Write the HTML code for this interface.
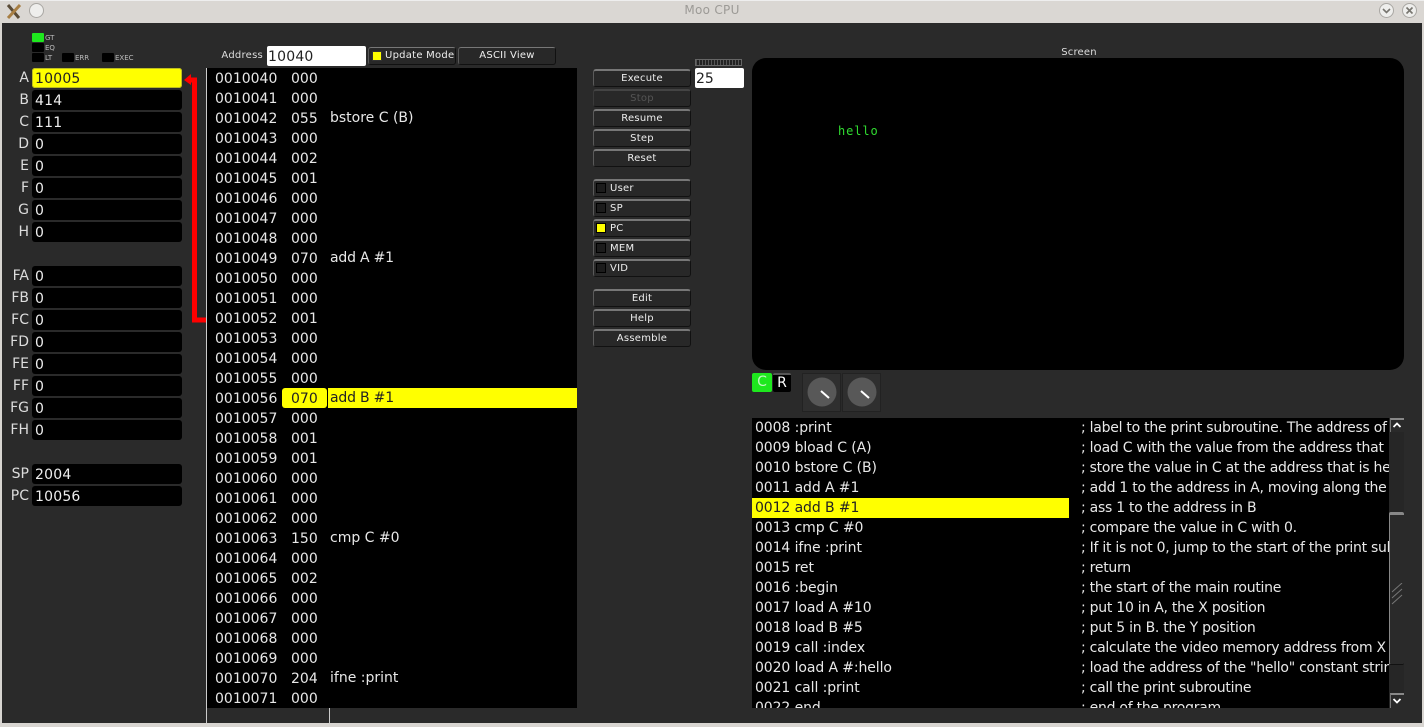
<!DOCTYPE html>
<html><head><meta charset="utf-8"><style>
html,body{margin:0;padding:0;width:1424px;height:727px;overflow:hidden;background:#2a2a2a}
body{position:relative;font-family:"DejaVu Sans",sans-serif;color:#e8e8e8;font-size:14px}
div,span{position:absolute;white-space:nowrap;box-sizing:border-box}
.t{line-height:20px;height:20px;margin-top:1px}
.reg{left:32px;width:150px;height:20px;background:#000;border-radius:3px;color:#eee;line-height:22px;padding-left:3px;letter-spacing:.2px}
.lab{width:29px;left:0;text-align:right;color:#ddd;line-height:20px;height:20px}
.btn{left:593px;width:98px;height:18px;background:#282828;border-radius:3px;border-top:2px solid #777;border-left:1px solid #5a5a5a;border-right:1px solid #111;border-bottom:1px solid #111;font-size:10px;line-height:15px;text-align:center;color:#eee;letter-spacing:.25px}
.l{text-align:left;padding-left:16px}
.led{width:10px;height:10px;background:#1c1c1c;border:1px solid #000;left:2px;top:2px}
.s{width:12px;height:9px;background:#000;border-radius:1px}
.sm{font-size:7px;color:#bbb;line-height:10px;height:10px}
.sr{left:0;color:#e8e8e8;line-height:20px;height:20px;margin-top:1px;letter-spacing:-.1px}
.src .sr:nth-child(odd){letter-spacing:-.26px}
</style></head><body>
<!-- title bar -->
<div style="left:0;top:0;width:1424px;height:23px;background:#dad7d3;border-top:1px solid #eee"></div>
<div style="left:0;top:0;width:1424px;height:23px;text-align:center;font-size:12px;line-height:21px;color:#9c9a96;letter-spacing:.3px">Moo CPU</div>
<svg style="position:absolute;left:5px;top:3px" width="18" height="17" viewBox="0 0 18 17"><path d="M3 2L14 15" stroke="#5a4c38" stroke-width="3"/><path d="M15 2L3 15" stroke="#a87f44" stroke-width="3"/></svg>
<div style="left:29px;top:3px;width:15px;height:15px;border-radius:50%;background:#eeeeec;border:1px solid #a9a7a3"></div>
<div style="left:1379px;top:3px;width:15px;height:15px;border-radius:50%;background:#eeeeec;border:1px solid #a9a7a3"></div>
<svg style="position:absolute;left:1379px;top:3px" width="15" height="15"><path d="M4 6L7.500 9.500L11 6" stroke="#77756f" stroke-width="1.600" fill="none"/></svg>
<div style="left:1402px;top:3px;width:15px;height:15px;border-radius:50%;background:#eeeeec;border:1px solid #a9a7a3"></div>
<svg style="position:absolute;left:1402px;top:3px" width="15" height="15"><path d="M4.500 4.500L10.500 10.500M10.500 4.500L4.500 10.500" stroke="#77756f" stroke-width="1.600"/></svg>
<div style="left:0;top:23px;width:2px;height:700px;background:#d8d5d1"></div>
<div style="left:1422px;top:23px;width:2px;height:700px;background:#d8d5d1"></div>
<div style="left:0;top:723px;width:1424px;height:4px;background:#d8d5d1"></div>

<!-- flags -->
<div class="s" style="left:32px;top:33px;background:#1ee81e"></div><div class="sm" style="left:45px;top:33px">GT</div>
<div class="s" style="left:32px;top:43px"></div><div class="sm" style="left:45px;top:43px">EQ</div>
<div class="s" style="left:32px;top:53px"></div><div class="sm" style="left:45px;top:53px">LT</div>
<div class="s" style="left:62px;top:53px"></div><div class="sm" style="left:75px;top:53px">ERR</div>
<div class="s" style="left:102px;top:53px"></div><div class="sm" style="left:115px;top:53px">EXEC</div>

<!-- registers -->
<div class="lab" style="top:68px">A</div><div class="reg" style="top:68px;background:#ff0;color:#222;box-shadow:inset 0 0 0 1px #bdbd20">10005</div>
<div class="lab" style="top:90px">B</div><div class="reg" style="top:90px">414</div>
<div class="lab" style="top:112px">C</div><div class="reg" style="top:112px">111</div>
<div class="lab" style="top:134px">D</div><div class="reg" style="top:134px">0</div>
<div class="lab" style="top:156px">E</div><div class="reg" style="top:156px">0</div>
<div class="lab" style="top:178px">F</div><div class="reg" style="top:178px">0</div>
<div class="lab" style="top:200px">G</div><div class="reg" style="top:200px">0</div>
<div class="lab" style="top:222px">H</div><div class="reg" style="top:222px">0</div>
<div class="lab" style="top:266px">FA</div><div class="reg" style="top:266px">0</div>
<div class="lab" style="top:288px">FB</div><div class="reg" style="top:288px">0</div>
<div class="lab" style="top:310px">FC</div><div class="reg" style="top:310px">0</div>
<div class="lab" style="top:332px">FD</div><div class="reg" style="top:332px">0</div>
<div class="lab" style="top:354px">FE</div><div class="reg" style="top:354px">0</div>
<div class="lab" style="top:376px">FF</div><div class="reg" style="top:376px">0</div>
<div class="lab" style="top:398px">FG</div><div class="reg" style="top:398px">0</div>
<div class="lab" style="top:420px">FH</div><div class="reg" style="top:420px">0</div>
<div class="lab" style="top:464px">SP</div><div class="reg" style="top:464px">2004</div>
<div class="lab" style="top:486px">PC</div><div class="reg" style="top:486px">10056</div>

<!-- arrow -->
<svg style="position:absolute;left:183px;top:70px" width="25" height="256"><path d="M6 10H11.500V250H23" stroke="#f00" stroke-width="5" fill="none"/><path d="M1 10L8 4V15Z" fill="#f00"/></svg>

<!-- address row -->
<div style="left:200px;width:63px;top:48px;text-align:right;font-size:10px;line-height:15px;color:#ddd;letter-spacing:.25px">Address</div>
<div style="left:267px;top:46px;width:99px;height:20px;background:#fff;border-radius:2px;color:#222;line-height:22px;padding-left:1px;letter-spacing:.2px">10040</div>
<div class="btn l" style="left:368px;top:47px;width:88px;height:18px;padding-left:16px;border-top-width:1px;line-height:16px"><span style="left:3px;top:3px;width:10px;height:10px;background:#ff0;border:1px solid #333"></span>Update Mode</div>
<div class="btn" style="left:458px;top:47px;width:98px;height:18px;border-top-width:1px;line-height:16px">ASCII View</div>

<!-- memory -->
<div style="left:206px;top:68px;width:1px;height:655px;background:#ccc"></div>
<div style="left:329px;top:708px;width:1px;height:15px;background:#ccc"></div>
<div style="left:207px;top:68px;width:370px;height:640px;background:#000" id="mem"></div>
<div style="left:282px;top:388px;width:45px;height:20px;background:#ff0;border-radius:3px"></div>
<div style="left:328px;top:388px;width:249px;height:20px;background:#ff0"></div>
<div class="t" style="left:215px;top:68px">0010040</div><div class="t" style="left:291px;top:68px">000</div>
<div class="t" style="left:215px;top:88px">0010041</div><div class="t" style="left:291px;top:88px">000</div>
<div class="t" style="left:215px;top:108px">0010042</div><div class="t" style="left:291px;top:108px">055</div><div class="t" style="left:330px;top:107px">bstore C (B)</div>
<div class="t" style="left:215px;top:128px">0010043</div><div class="t" style="left:291px;top:128px">000</div>
<div class="t" style="left:215px;top:148px">0010044</div><div class="t" style="left:291px;top:148px">002</div>
<div class="t" style="left:215px;top:168px">0010045</div><div class="t" style="left:291px;top:168px">001</div>
<div class="t" style="left:215px;top:188px">0010046</div><div class="t" style="left:291px;top:188px">000</div>
<div class="t" style="left:215px;top:208px">0010047</div><div class="t" style="left:291px;top:208px">000</div>
<div class="t" style="left:215px;top:228px">0010048</div><div class="t" style="left:291px;top:228px">000</div>
<div class="t" style="left:215px;top:248px">0010049</div><div class="t" style="left:291px;top:248px">070</div><div class="t" style="left:330px;top:247px;letter-spacing:-.2px">add A #1</div>
<div class="t" style="left:215px;top:268px">0010050</div><div class="t" style="left:291px;top:268px">000</div>
<div class="t" style="left:215px;top:288px">0010051</div><div class="t" style="left:291px;top:288px">000</div>
<div class="t" style="left:215px;top:308px">0010052</div><div class="t" style="left:291px;top:308px">001</div>
<div class="t" style="left:215px;top:328px">0010053</div><div class="t" style="left:291px;top:328px">000</div>
<div class="t" style="left:215px;top:348px">0010054</div><div class="t" style="left:291px;top:348px">000</div>
<div class="t" style="left:215px;top:368px">0010055</div><div class="t" style="left:291px;top:368px">000</div>
<div class="t" style="left:215px;top:388px">0010056</div><div class="t" style="left:291px;top:388px;color:#222">070</div><div class="t" style="left:330px;top:387px;color:#222;letter-spacing:-.2px">add B #1</div>
<div class="t" style="left:215px;top:408px">0010057</div><div class="t" style="left:291px;top:408px">000</div>
<div class="t" style="left:215px;top:428px">0010058</div><div class="t" style="left:291px;top:428px">001</div>
<div class="t" style="left:215px;top:448px">0010059</div><div class="t" style="left:291px;top:448px">001</div>
<div class="t" style="left:215px;top:468px">0010060</div><div class="t" style="left:291px;top:468px">000</div>
<div class="t" style="left:215px;top:488px">0010061</div><div class="t" style="left:291px;top:488px">000</div>
<div class="t" style="left:215px;top:508px">0010062</div><div class="t" style="left:291px;top:508px">000</div>
<div class="t" style="left:215px;top:528px">0010063</div><div class="t" style="left:291px;top:528px">150</div><div class="t" style="left:330px;top:527px">cmp C #0</div>
<div class="t" style="left:215px;top:548px">0010064</div><div class="t" style="left:291px;top:548px">000</div>
<div class="t" style="left:215px;top:568px">0010065</div><div class="t" style="left:291px;top:568px">002</div>
<div class="t" style="left:215px;top:588px">0010066</div><div class="t" style="left:291px;top:588px">000</div>
<div class="t" style="left:215px;top:608px">0010067</div><div class="t" style="left:291px;top:608px">000</div>
<div class="t" style="left:215px;top:628px">0010068</div><div class="t" style="left:291px;top:628px">000</div>
<div class="t" style="left:215px;top:648px">0010069</div><div class="t" style="left:291px;top:648px">000</div>
<div class="t" style="left:215px;top:668px">0010070</div><div class="t" style="left:291px;top:668px">204</div><div class="t" style="left:330px;top:667px">ifne :print</div>
<div class="t" style="left:215px;top:688px">0010071</div><div class="t" style="left:291px;top:688px">000</div>

<!-- buttons -->
<div class="btn" style="top:69px">Execute</div>
<div class="btn" style="top:89px;color:#555;border-top-color:#444;border-left-color:#3a3a3a">Stop</div>
<div class="btn" style="top:109px">Resume</div>
<div class="btn" style="top:129px">Step</div>
<div class="btn" style="top:149px">Reset</div>
<div class="btn l" style="top:179px"><span class="led"></span>User</div>
<div class="btn l" style="top:199px"><span class="led"></span>SP</div>
<div class="btn l" style="top:219px"><span class="led" style="background:#ff0"></span>PC</div>
<div class="btn l" style="top:239px"><span class="led"></span>MEM</div>
<div class="btn l" style="top:259px"><span class="led"></span>VID</div>
<div class="btn" style="top:289px">Edit</div>
<div class="btn" style="top:309px">Help</div>
<div class="btn" style="top:329px">Assemble</div>

<!-- speed -->
<div style="left:695px;top:59px;width:47px;height:7px;background:repeating-linear-gradient(90deg,#555 0 1px,#222 1px 3px);border:1px solid #666"></div>
<div style="left:695px;top:68px;width:49px;height:20px;background:#fff;border-radius:2px;color:#222;line-height:22px;padding-left:1px">25</div>

<!-- screen -->
<div style="left:752px;top:46px;width:654px;text-align:center;font-size:10px;line-height:13px;color:#ddd;letter-spacing:.2px">Screen</div>
<div style="left:752px;top:58px;width:652px;height:312px;background:#000;border-radius:14px"></div>
<div style="left:838px;top:124px;font-size:12px;line-height:15px;color:#30dc30;letter-spacing:.9px;font-family:'DejaVu Sans Mono',monospace;">hello</div>

<!-- C/R and knobs -->
<div style="left:752px;top:373px;width:20px;height:19px;background:#1ee81e;border-radius:2px;color:#bff5bf;text-align:center;line-height:19px">C</div>
<div style="left:773px;top:373px;width:18px;height:19px;background:#000;border-top:2px solid #555;border-radius:2px;color:#fff;text-align:center;line-height:17px">R</div>
<div style="left:802px;top:373px;width:39px;height:39px;background:#2f2f2f;border:1px solid #222"></div>
<div style="left:842px;top:373px;width:39px;height:39px;background:#2f2f2f;border:1px solid #222"></div>
<svg style="position:absolute;left:802px;top:373px" width="80" height="39"><circle cx="20" cy="19" r="14.500" fill="#585858"/><circle cx="60" cy="19" r="14.500" fill="#585858"/><path d="M19 18L27 25M59 18L67 25" stroke="#fff" stroke-width="2"/></svg>

<!-- source -->
<div class="src" style="left:752px;top:418px;width:637px;height:290px;background:#000;overflow:hidden">
<div style="left:0;top:80px;width:317px;height:20px;background:#ff0"></div>
<div class="sr" style="left:3px;top:-1px">0008 :print</div><div class="sr" style="left:329px;top:-1px">; label to the print subroutine. The address of</div>
<div class="sr" style="left:3px;top:19px">0009 bload C (A)</div><div class="sr" style="left:329px;top:19px">; load C with the value from the address that</div>
<div class="sr" style="left:3px;top:39px">0010 bstore C (B)</div><div class="sr" style="left:329px;top:39px">; store the value in C at the address that is he</div>
<div class="sr" style="left:3px;top:59px">0011 add A #1</div><div class="sr" style="left:329px;top:59px">; add 1 to the address in A, moving along the</div>
<div class="sr" style="left:3px;top:79px;color:#222">0012 add B #1</div><div class="sr" style="left:329px;top:79px">; ass 1 to the address in B</div>
<div class="sr" style="left:3px;top:99px">0013 cmp C #0</div><div class="sr" style="left:329px;top:99px">; compare the value in C with 0.</div>
<div class="sr" style="left:3px;top:119px">0014 ifne :print</div><div class="sr" style="left:329px;top:119px">; If it is not 0, jump to the start of the print sub</div>
<div class="sr" style="left:3px;top:139px">0015 ret</div><div class="sr" style="left:329px;top:139px">; return</div>
<div class="sr" style="left:3px;top:159px">0016 :begin</div><div class="sr" style="left:329px;top:159px">; the start of the main routine</div>
<div class="sr" style="left:3px;top:179px">0017 load A #10</div><div class="sr" style="left:329px;top:179px">; put 10 in A, the X position</div>
<div class="sr" style="left:3px;top:199px">0018 load B #5</div><div class="sr" style="left:329px;top:199px">; put 5 in B. the Y position</div>
<div class="sr" style="left:3px;top:219px">0019 call :index</div><div class="sr" style="left:329px;top:219px">; calculate the video memory address from X</div>
<div class="sr" style="left:3px;top:239px">0020 load A #:hello</div><div class="sr" style="left:329px;top:239px">; load the address of the "hello" constant strin</div>
<div class="sr" style="left:3px;top:259px">0021 call :print</div><div class="sr" style="left:329px;top:259px">; call the print subroutine</div>
<div class="sr" style="left:3px;top:279px">0022 end</div><div class="sr" style="left:329px;top:279px">; end of the program</div>
</div>

<!-- scrollbar -->
<div style="left:1389px;top:418px;width:15px;height:290px;background:#262626"></div>
<div style="left:1390px;top:418px;width:14px;height:14px;background:#2a2a2a;border-top:2px solid #888;border-left:1px solid #777"></div>
<svg style="position:absolute;left:1390px;top:420px" width="14" height="12"><path d="M3.500 7L7 3.500L10.500 7" stroke="#fff" stroke-width="1.800" fill="none"/></svg>
<div style="left:1389px;top:512px;width:15px;height:153px;background:#2a2a2a;border-top:3px solid #888;border-left:1px solid #888;border-bottom:1px solid #111;border-radius:2px"></div>
<svg style="position:absolute;left:1391px;top:583px" width="13" height="24"><path d="M1 9L11 0M1 15L11 6M1 21L11 12" stroke="#777" stroke-width="1" fill="none"/></svg>
<div style="left:1390px;top:693px;width:14px;height:15px;background:#2a2a2a;border-top:2px solid #888;border-left:1px solid #777"></div>
<svg style="position:absolute;left:1390px;top:695px" width="14" height="12"><path d="M3.500 4L7 7.500L10.500 4" stroke="#fff" stroke-width="1.800" fill="none"/></svg>
</body></html>
